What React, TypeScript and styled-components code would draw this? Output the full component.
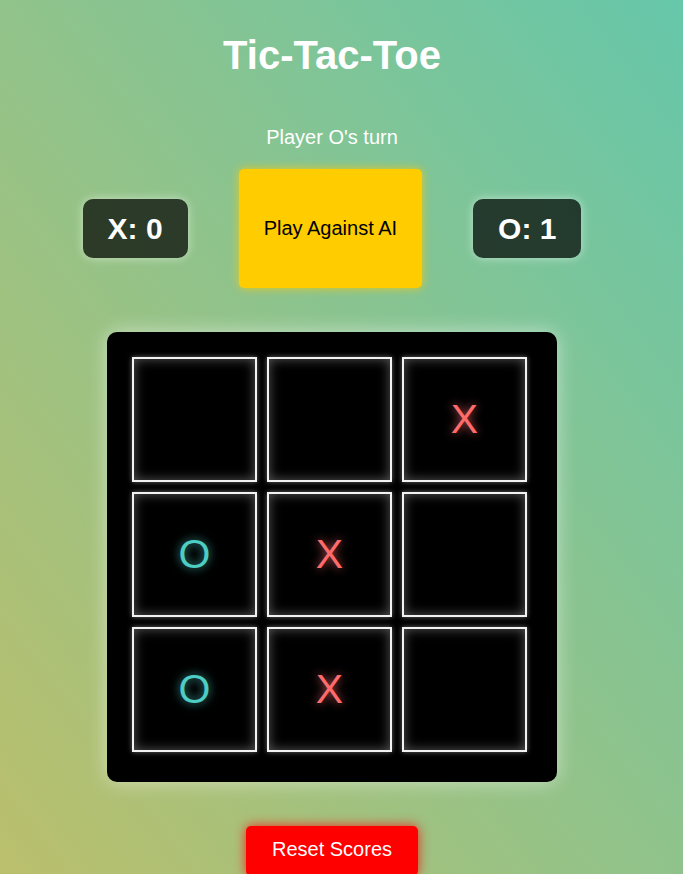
import { FC } from 'react';
import styled, { createGlobalStyle } from 'styled-components';

const GlobalStyle = createGlobalStyle`
  html, body {
    margin: 0;
    padding: 0;
  }
  body {
    font-family: "Liberation Sans", Arial, sans-serif;
    background: linear-gradient(to top right, #bcbf6b, #66c7aa);
    min-height: 100vh;
  }
`;

const Page = styled.div`
  display: flex;
  flex-direction: column;
  align-items: center;
  padding: 32px 19px 30px 0;
  color: #ffffff;
`;

const Title = styled.h1`
  margin: 0;
  font-size: 40px;
  font-weight: bold;
  line-height: 46px;
`;

const Status = styled.p`
  margin: 48px 0 0;
  font-size: 20px;
  line-height: 23px;
`;

const ScoreRow = styled.div`
  display: flex;
  align-items: center;
  gap: 51px;
  margin-top: 20px;
`;

const ScoreBox = styled.div`
  background: rgba(0, 0, 0, 0.7);
  border-radius: 10px;
  padding: 13px 25px;
  font-size: 30px;
  font-weight: bold;
  line-height: 33px;
  box-shadow: 0 0 10px rgba(255, 255, 255, 0.5);
`;

const AiButton = styled.button`
  height: 119px;
  padding: 0 25px;
  border: none;
  border-radius: 5px;
  background: #ffcc00;
  color: #000000;
  font-family: inherit;
  font-size: 20px;
  box-shadow: 0 0 10px rgba(255, 204, 0, 0.8);
  cursor: pointer;
`;

const Board = styled.div`
  display: grid;
  grid-template-columns: repeat(3, 125px);
  grid-auto-rows: 125px;
  gap: 10px;
  width: 400px;
  height: 400px;
  padding: 25px;
  margin-top: 44px;
  background: #000000;
  border-radius: 10px;
  box-shadow: 0 0 20px rgba(255, 255, 255, 0.5);
`;

type Mark = 'X' | 'O' | '';

const Cell = styled.div<{ $mark: Mark }>`
  box-sizing: border-box;
  display: flex;
  align-items: center;
  justify-content: center;
  border: 2px solid #f2f2f2;
  background: #000000;
  box-shadow: 0 0 5px rgba(255, 255, 255, 0.4),
    inset 0 0 12px rgba(255, 255, 255, 0.35);
  font-size: 41px;
  color: ${p => (p.$mark === 'X' ? '#ff6b6b' : '#4ecdc4')};
  text-shadow: 0 0 10px
    ${p => (p.$mark === 'X' ? 'rgba(255, 107, 107, 0.8)' : 'rgba(78, 205, 196, 0.8)')};
  cursor: pointer;
`;

const ResetButton = styled.button`
  margin-top: 44px;
  padding: 12px 26px 15px;
  border: none;
  border-radius: 5px;
  background: #ff0000;
  color: #ffffff;
  font-family: inherit;
  font-size: 20px;
  line-height: 23px;
  box-shadow: 0 0 12px rgba(255, 0, 0, 0.8);
  cursor: pointer;
`;

const board: Mark[] = ['', '', 'X', 'O', 'X', '', 'O', 'X', ''];

const App: FC = () => {
  return (
    <>
      <GlobalStyle />
      <Page>
        <Title>Tic-Tac-Toe</Title>
        <Status>Player O's turn</Status>
        <ScoreRow>
          <ScoreBox>X: 0</ScoreBox>
          <AiButton>Play Against AI</AiButton>
          <ScoreBox>O: 1</ScoreBox>
        </ScoreRow>
        <Board>
          {board.map((mark, i) => (
            <Cell key={i} $mark={mark}>
              {mark}
            </Cell>
          ))}
        </Board>
        <ResetButton>Reset Scores</ResetButton>
      </Page>
    </>
  );
};

export default App;
